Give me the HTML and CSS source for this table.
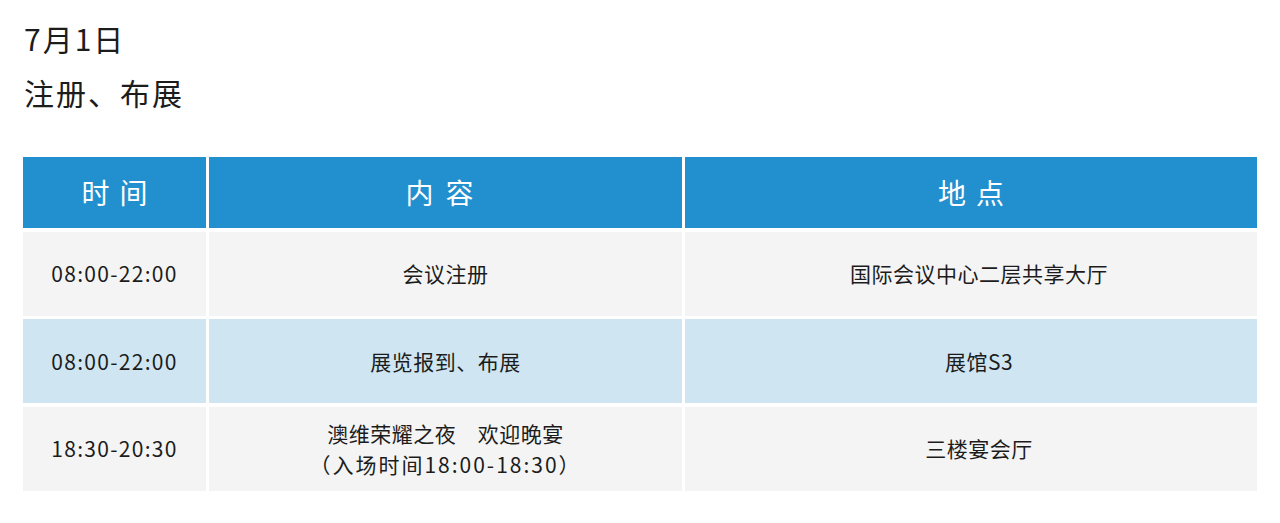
FILE: index.html
```html
<!DOCTYPE html>
<html lang="zh-CN">
<head>
<meta charset="utf-8">
<title>7月1日 注册、布展</title>
<link rel="stylesheet" href="styles.css">
</head>
<body>
<div class="page">
  <h1 class="day">7月1日</h1>
  <h2 class="topic">注册、布展</h2>
  <div class="schedule">
    <div class="cell head head-time">时间</div>
    <div class="cell head head-content">内容</div>
    <div class="cell head head-place">地点</div>

    <div class="cell row-gray num">08:00-22:00</div>
    <div class="cell row-gray">会议注册</div>
    <div class="cell row-gray place">国际会议中心二层共享大厅</div>

    <div class="cell row-blue num">08:00-22:00</div>
    <div class="cell row-blue">展览报到、布展</div>
    <div class="cell row-blue place">展馆S3</div>

    <div class="cell row-gray num">18:30-20:30</div>
    <div class="cell row-gray multi"><span>澳维荣耀之夜　欢迎晚宴</span><span class="note">（入场时间18:00-18:30）</span></div>
    <div class="cell row-gray place">三楼宴会厅</div>
  </div>
</div>
</body>
</html>
```

FILE: styles.css
```css
html, body {
  margin: 0;
  padding: 0;
  background: #ffffff;
}

body {
  font-family: "Noto Sans CJK SC", "Noto Sans", sans-serif;
  color: #1c1c1c;
}

.page {
  padding: 18px 23px 0 23px;
}

.day,
.topic {
  margin: 0;
  font-size: 30px;
  font-weight: 400;
  line-height: 40px;
  letter-spacing: 2px;
  padding-left: 1px;
}

.topic {
  margin-top: 14px;
}

.schedule {
  margin-top: 45px;
  display: grid;
  grid-template-columns: 183px 473px 572px;
  grid-template-rows: 71px 84px 84px 84px;
  column-gap: 3px;
  row-gap: 3.5px;
  width: 1234px;
}

.cell {
  display: flex;
  align-items: center;
  justify-content: center;
  text-align: center;
  font-size: 21px;
  letter-spacing: 0.5px;
  line-height: 31px;
}

.num {
  letter-spacing: 1.3px;
}

.place {
  padding-left: 16px;
}

.head {
  background: #2290cf;
  color: #ffffff;
  font-size: 28px;
  letter-spacing: 10px;
  text-indent: 10px;
}

.head-content {
  letter-spacing: 12px;
  text-indent: 0;
}

.row-gray {
  background: #f4f4f4;
}

.row-blue {
  background: #cfe6f2;
}

.multi {
  flex-direction: column;
}

.note {
  letter-spacing: 2px;
}
```
